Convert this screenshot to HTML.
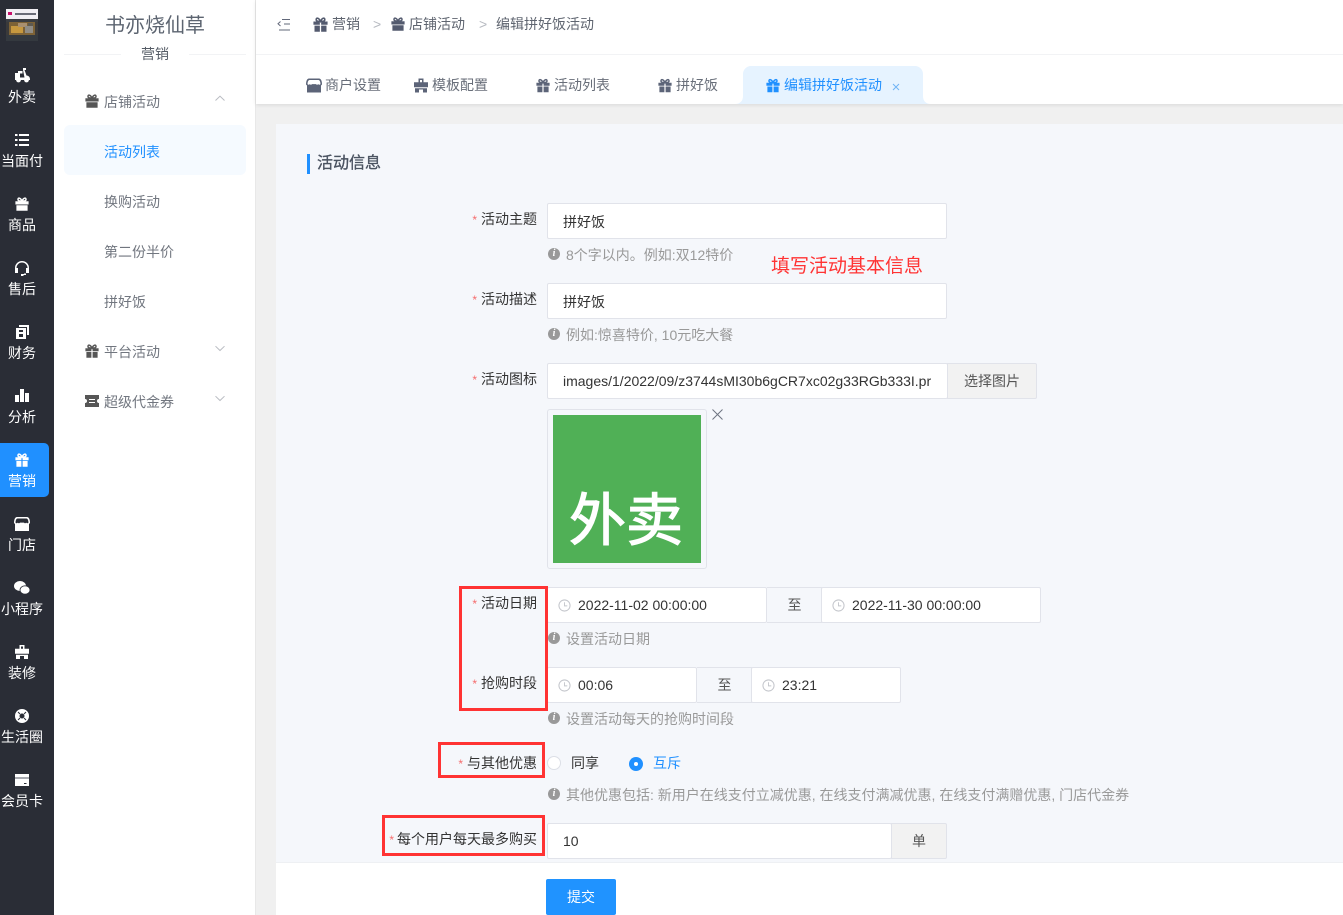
<!DOCTYPE html>
<html lang="zh"><head><meta charset="utf-8"><title>编辑拼好饭活动</title>
<style>
*{box-sizing:border-box}
html,body{margin:0;padding:0}
body{width:1343px;height:915px;overflow:hidden;position:relative;background:#f0f0f0;font-family:"Liberation Sans","Noto Sans CJK SC",sans-serif;font-size:14px;color:#333}
.a{position:absolute}
.t{position:absolute;white-space:nowrap;line-height:20px;height:20px}
svg.i{position:absolute;fill:currentColor}
.side{left:0;top:0;width:54px;height:915px;background:#2a2d36}
.sl{position:absolute;left:0;width:44px;text-align:center;color:#fff;line-height:20px;font-size:14px;white-space:nowrap;margin-top:1px}
.m{color:#71767f;margin-top:1px}
.inp{position:absolute;background:#fff;border:1px solid #e1e3ea;border-radius:2px;height:36px;line-height:34px;padding-left:15px;color:#333;white-space:nowrap;overflow:hidden;font-size:14px}
.add{position:absolute;background:#f2f2f2;border:1px solid #e1e3ea;height:36px;line-height:34px;text-align:center;color:#555;font-size:14px}
.add2{background:#f5f7fb}
.lab{position:absolute;right:806px;line-height:20px;white-space:nowrap;color:#333}
.lab b{color:#f56c6c;font-weight:normal;margin-right:4px;font-size:12px}
.hint{position:absolute;left:566px;line-height:20px;color:#999;white-space:nowrap;margin-top:1px}
.hi{position:absolute;left:548px;width:12px;height:12px;border-radius:50%;background:#999;color:#fff;font:italic bold 10px/12px "Liberation Serif",serif;text-align:center}
.rb{position:absolute;border:3px solid #f33}
.clk{position:absolute;width:13px;height:13px;color:#c4c6cc}
</style></head><body>
<svg width="0" height="0" style="position:absolute">
<symbol id="g" viewBox="0 0 14 14"><path d="M.4 4.200h6v3H.4zM7.600 4.200h6v3h-6zM1.400 8h5v5.800h-5zM7.600 8h5v5.800h-5z"/><path d="M7 4C5.400.6 3 .4 3 2.400S5.400 4 7 4c1.600 0 4 .4 4-1.600S8.600.6 7 4z" fill="none" stroke="currentColor" stroke-width="1.500"/></symbol>
<symbol id="g2" viewBox="0 0 14 14"><path d="M.4 4.200h13.200v3.300H.4zM1.400 8.300h11.200v5.500H1.400z"/><path d="M7 4C5.400.6 3 .4 3 2.400S5.400 4 7 4c1.600 0 4 .4 4-1.600S8.600.6 7 4z" fill="none" stroke="currentColor" stroke-width="1.500"/></symbol>
<symbol id="shop" viewBox="0 0 16 14"><path d="M3 0h10c2 0 3 2.500 3 6l-1 1v7H1V7L0 6c0-3.500 1-6 3-6zm.5 1.500C2.300 1.500 1.600 3.500 1.500 5.600c.8.800 1.500.8 2.300 0 .8.800 1.500.800 2.200 0h4c.700.800 1.400.800 2.200 0 .8.800 1.500.800 2.300 0-.1-2.100-.8-4.100-2-4.100z" fill-rule="evenodd"/></symbol>
<symbol id="tpl" viewBox="0 0 14 14"><path d="M4.500 0h5v3.800H14v5H0v-5h4.500zM6 1.500v2.300h2V1.500zM1 9.800h12V14H9v-3H5v3H1z" fill-rule="evenodd"/></symbol>
<symbol id="clock" viewBox="0 0 14 14"><circle cx="7" cy="7" r="6" fill="none" stroke="currentColor" stroke-width="1.100"/><path d="M7 3.500V7.400H10" fill="none" stroke="currentColor"/></symbol>
</svg>

<div class="a side"></div>
<svg class="a" style="left:6px;top:9px" width="32" height="32" viewBox="0 0 32 32"><rect width="32" height="32" fill="#3b3a3a"/><rect width="32" height="10" fill="#f1eff4"/><rect x="2" y="3" width="4" height="3" fill="#c8106b"/><rect x="9" y="4" width="21" height="2" fill="#6a6c78"/><rect y="10" width="32" height="3" fill="#3a3d42"/><rect x="3" y="13" width="26" height="13" fill="#7d6236"/><rect x="5" y="17" width="12" height="7" fill="#c6983f"/><rect x="12" y="14" width="9" height="4" fill="#a99070"/><rect x="19" y="17" width="8" height="7" fill="#8f8c86"/><rect x="22" y="14" width="5" height="3" fill="#5f5a50"/><rect y="26" width="32" height="6" fill="#34393f"/></svg>

<svg class="i" style="left:15px;top:68px;color:#fff" width="15" height="15" viewBox="0 0 15 15"><path d="M8 0h3v2H9.500l2 5.500A3.500 3.500 0 0 1 15 11v1h-1.100a2.400 2.400 0 0 1-4.800 0H5.900a2.400 2.400 0 0 1-4.800 0H0V5h3V3H7.500V5.500H5v4h4.500L8 2z"/></svg>
<div class="sl" style="top:86px">外卖</div>
<svg class="i" style="left:15px;top:134px;color:#fff" width="14" height="13" viewBox="0 0 14 13"><path d="M0 0h2.500v2H0zM4 0h10v2H4zM0 5h2.500v2H0zM4 5h10v2H4zM0 10h2.500v2H0zM4 10h10v2H4z"/></svg>
<div class="sl" style="top:150px">当面付</div>
<svg class="i" style="left:15px;top:197px;color:#fff" width="14" height="14"><use href="#g2"/></svg>
<div class="sl" style="top:214px">商品</div>
<svg class="i" style="left:15px;top:261px;color:#fff" width="14" height="15" viewBox="0 0 14 15"><path d="M7 0a7 7 0 0 1 7 7v5h-3V7h1.500a5.500 5.500 0 0 0-11 0H3v5H0V7a7 7 0 0 1 7-7zM9 12.500h2V14H8.500v1H6v-2h3z"/></svg>
<div class="sl" style="top:278px">售后</div>
<svg class="i" style="left:16px;top:325px;color:#fff" width="13" height="14" viewBox="0 0 13 14"><path d="M3 0h10v10h-2V2H3zM0 3h10v11H0zM3 5v2h4V5zM3 9v3h4V9z" fill-rule="evenodd"/></svg>
<div class="sl" style="top:342px">财务</div>
<svg class="i" style="left:15px;top:389px;color:#fff" width="14" height="13" viewBox="0 0 14 13"><path d="M0 6h4v7H0zM5 0h4v13H5zM10 4h4v9h-4z"/></svg>
<div class="sl" style="top:406px">分析</div>
<div class="a" style="left:0;top:443px;width:49px;height:54px;background:#2090ff;border-radius:0 5px 5px 0"></div>
<svg class="i" style="left:15px;top:453px;color:#fff" width="14" height="14"><use href="#g"/></svg>
<div class="sl" style="top:470px">营销</div>
<svg class="i" style="left:14px;top:517px;color:#fff" width="16" height="14"><use href="#shop"/></svg>
<div class="sl" style="top:534px">门店</div>
<svg class="i" style="left:14px;top:581px;color:#fff" width="16" height="14" viewBox="0 0 16 14"><ellipse cx="6" cy="5" rx="6" ry="5"/><ellipse cx="11" cy="9" rx="5" ry="4.200" stroke="#2a2d36" stroke-width=".8"/></svg>
<div class="sl" style="top:598px">小程序</div>
<svg class="i" style="left:15px;top:645px;color:#fff" width="14" height="14"><use href="#tpl"/></svg>
<div class="sl" style="top:662px">装修</div>
<svg class="i" style="left:15px;top:709px;color:#fff" width="14" height="14" viewBox="0 0 14 14"><path d="M7 0a7 7 0 1 1 0 14A7 7 0 0 1 7 0zm0 4.500a2.500 2.500 0 1 0 0 5 2.500 2.500 0 0 0 0-5z" fill-rule="evenodd"/><path d="M3 3l2 2M11 3 9 5M3 11l2-2M11 11 9 9" stroke="#2a2d36" stroke-width="1"/></svg>
<div class="sl" style="top:726px">生活圈</div>
<svg class="i" style="left:15px;top:774px" width="14" height="12" viewBox="0 0 14 12"><path fill="#fff" d="M0 0h14v12H0z"/><path fill="#a9abb1" d="M0 3h14v2H0z"/><path fill="#2a2d36" d="M9 9h2.500v1H9z"/></svg>
<div class="sl" style="top:790px">会员卡</div>

<div class="a" style="left:54px;top:0;width:202px;height:915px;background:#fff;border-right:1px solid #e8e8e8"></div>
<div class="t" style="left:105px;top:13px;font-size:20px;line-height:26px;height:26px;color:#5c6470">书亦烧仙草</div>
<div class="a" style="left:64px;top:54px;width:57px;height:1px;background:#f2f3f5"></div>
<div class="a" style="left:189px;top:54px;width:57px;height:1px;background:#f2f3f5"></div>
<div class="t" style="left:141px;top:44px;color:#555c66">营销</div>
<svg class="i" style="left:85px;top:94px;color:#565656" width="14" height="14"><use href="#g2"/></svg>
<div class="t m" style="left:104px;top:91px">店铺活动</div>
<svg class="a" style="left:215px;top:95px" width="10" height="7" viewBox="0 0 10 7"><path d="M.5 5.500 5 1.200 9.500 5.500" fill="none" stroke="#b9bcc2"/></svg>
<div class="a" style="left:64px;top:125px;width:182px;height:50px;background:#f5faff;border-radius:6px"></div>
<div class="t" style="left:104px;top:142px;color:#2090ff">活动列表</div>
<div class="t m" style="left:104px;top:191px">换购活动</div>
<div class="t m" style="left:104px;top:241px">第二份半价</div>
<div class="t m" style="left:104px;top:291px">拼好饭</div>
<svg class="i" style="left:85px;top:344px;color:#565656" width="14" height="14"><use href="#g"/></svg>
<div class="t m" style="left:104px;top:341px">平台活动</div>
<svg class="a" style="left:215px;top:345px" width="10" height="7" viewBox="0 0 10 7"><path d="M.5 1.200 5 5.500 9.500 1.200" fill="none" stroke="#b9bcc2"/></svg>
<svg class="i" style="left:85px;top:395px;color:#565656" width="14" height="12" viewBox="0 0 14 12"><path d="M0 0h14v4a2 2 0 0 0 0 4v4H0V8a2 2 0 0 0 0-4zM4 4v1h6V4zM4 7v1h6V7z" fill-rule="evenodd"/></svg>
<div class="t m" style="left:104px;top:391px">超级代金券</div>
<svg class="a" style="left:215px;top:395px" width="10" height="7" viewBox="0 0 10 7"><path d="M.5 1.200 5 5.500 9.500 1.200" fill="none" stroke="#b9bcc2"/></svg>

<div class="a" style="left:256px;top:0;width:1087px;height:104px;background:#fff;box-shadow:0 1px 4px rgba(0,0,0,.1)"></div>
<div class="a" style="left:256px;top:54px;width:1087px;height:1px;background:#f2f3f5"></div>
<svg class="a" style="left:277px;top:18px" width="14" height="13" viewBox="0 0 14 13"><path d="M5 1.500h8M7 6h6M2 12h11" stroke="#62687a" fill="none"/><path d="M3.500 3.500 1 5.800 3.500 8" stroke="#62687a" fill="none"/></svg>
<svg class="i" style="left:313px;top:17px;color:#535a6e" width="15" height="15"><use href="#g"/></svg>
<div class="t" style="left:332px;top:14px;color:#5f6570">营销</div>
<div class="t" style="left:373px;top:14px;color:#b6b9c0">&gt;</div>
<svg class="i" style="left:391px;top:17px;color:#535a6e" width="14" height="14"><use href="#g2"/></svg>
<div class="t" style="left:409px;top:14px;color:#5f6570">店铺活动</div>
<div class="t" style="left:479px;top:14px;color:#b6b9c0">&gt;</div>
<div class="t" style="left:496px;top:14px;color:#5f6570">编辑拼好饭活动</div>

<svg class="i" style="left:306px;top:78px;color:#5c6478" width="16" height="15"><use href="#shop"/></svg>
<div class="t" style="left:325px;top:75px;color:#686e79">商户设置</div>
<svg class="i" style="left:414px;top:78px;color:#5c6478" width="14" height="15"><use href="#tpl"/></svg>
<div class="t" style="left:432px;top:75px;color:#686e79">模板配置</div>
<svg class="i" style="left:536px;top:78px;color:#5c6478" width="14" height="15"><use href="#g"/></svg>
<div class="t" style="left:554px;top:75px;color:#686e79">活动列表</div>
<svg class="i" style="left:658px;top:78px;color:#5c6478" width="14" height="15"><use href="#g"/></svg>
<div class="t" style="left:676px;top:75px;color:#686e79">拼好饭</div>
<svg class="a" style="left:735px;top:66px" width="196" height="38" viewBox="0 0 196 38"><path d="M0 38c5 0 8-3 8-8V8a8 8 0 0 1 8-8h164a8 8 0 0 1 8 8v22c0 5 3 8 8 8z" fill="#e6f3ff"/></svg>
<svg class="i" style="left:766px;top:78px;color:#2090ff" width="14" height="15"><use href="#g"/></svg>
<div class="t" style="left:784px;top:75px;color:#2090ff">编辑拼好饭活动</div>
<svg class="a" style="left:892px;top:83px" width="8" height="8" viewBox="0 0 8 8"><path d="M1 1l6 6M7 1 1 7" stroke="#6fb4f5" fill="none"/></svg>

<div class="a" style="left:276px;top:124px;width:1067px;height:738px;background:#f5f7fb"></div>
<div class="a" style="left:276px;top:862px;width:1067px;height:53px;background:#fff;border-top:1px solid #eef0f3"></div>
<div class="a" style="left:307px;top:154px;width:3px;height:20px;background:#2090ff"></div>
<div class="t" style="left:317px;top:154px;font-size:16px;line-height:20px;height:20px;color:#4b5361;-webkit-text-stroke:.35px #4b5361">活动信息</div>

<div class="lab" style="top:209px"><b>*</b>活动主题</div>
<div class="inp" style="left:547px;top:203px;width:400px;line-height:36px">拼好饭</div>
<div class="hi" style="top:248px">i</div><div class="hint" style="top:244px">8个字以内。例如:双12特价</div>
<div class="t" style="left:771px;top:254px;font-size:19px;line-height:26px;height:26px;color:#f33">填写活动基本信息</div>

<div class="lab" style="top:289px"><b>*</b>活动描述</div>
<div class="inp" style="left:547px;top:283px;width:400px;line-height:36px">拼好饭</div>
<div class="hi" style="top:328px">i</div><div class="hint" style="top:324px">例如:惊喜特价, 10元吃大餐</div>

<div class="lab" style="top:369px"><b>*</b>活动图标</div>
<div class="inp" style="left:547px;top:363px;width:401px;padding-right:14px">images/1/2022/09/z3744sMI30b6gCR7xc02g33RGb333I.pr</div>
<div class="add" style="left:947px;top:363px;width:90px;border-radius:0 2px 2px 0">选择图片</div>
<div class="a" style="left:547px;top:409px;width:160px;height:160px;border:1px solid #e1e3ea;border-radius:3px;background:#f5f7fb"></div>
<div class="a" style="left:553px;top:415px;width:148px;height:148px;background:#50b056;overflow:hidden"><div style="position:absolute;left:16px;top:58px;width:120px;font-size:57px;line-height:86px;color:#fff;white-space:nowrap;font-family:'Noto Sans CJK SC',sans-serif;-webkit-text-stroke:1.2px #fff">外卖</div></div>
<svg class="a" style="left:712px;top:409px" width="11" height="11" viewBox="0 0 11 11"><path d="M.5.500l10 10M10.500.500l-10 10" stroke="#6d7480" fill="none"/></svg>

<div class="lab" style="top:593px"><b>*</b>活动日期</div>
<div class="inp" style="left:547px;top:587px;width:220px;padding-left:30px">2022-11-02 00:00:00</div>
<div class="add add2" style="left:767px;top:587px;width:55px;border-left:0;border-right:0">至</div>
<div class="inp" style="left:821px;top:587px;width:220px;padding-left:30px">2022-11-30 00:00:00</div>
<svg class="clk" style="left:558px;top:599px"><use href="#clock"/></svg>
<svg class="clk" style="left:832px;top:599px"><use href="#clock"/></svg>
<div class="hi" style="top:632px">i</div><div class="hint" style="top:628px">设置活动日期</div>

<div class="lab" style="top:673px"><b>*</b>抢购时段</div>
<div class="inp" style="left:547px;top:667px;width:150px;padding-left:30px">00:06</div>
<div class="add add2" style="left:697px;top:667px;width:55px;border-left:0;border-right:0">至</div>
<div class="inp" style="left:751px;top:667px;width:150px;padding-left:30px">23:21</div>
<svg class="clk" style="left:558px;top:679px"><use href="#clock"/></svg>
<svg class="clk" style="left:762px;top:679px"><use href="#clock"/></svg>
<div class="hi" style="top:712px">i</div><div class="hint" style="top:708px">设置活动每天的抢购时间段</div>

<div class="lab" style="top:753px"><b>*</b>与其他优惠</div>
<div class="a" style="left:547px;top:756px;width:14px;height:14px;border-radius:50%;border:1px solid #dcdfe6;background:#fff"></div>
<div class="t" style="left:571px;top:753px">同享</div>
<div class="a" style="left:629px;top:757px;width:14px;height:14px;border-radius:50%;background:#2090ff"></div>
<div class="a" style="left:634px;top:762px;width:4px;height:4px;border-radius:50%;background:#fff"></div>
<div class="t" style="left:653px;top:753px;color:#2090ff">互斥</div>
<div class="hi" style="top:788px">i</div><div class="hint" style="top:784px">其他优惠包括: 新用户在线支付立减优惠, 在线支付满减优惠, 在线支付满赠优惠, 门店代金券</div>

<div class="lab" style="top:829px"><b style="margin-right:3px">*</b>每个用户每天最多购买</div>
<div class="inp" style="left:547px;top:823px;width:345px">10</div>
<div class="add" style="left:891px;top:823px;width:56px;border-radius:0 2px 2px 0">单</div>

<div class="a" style="left:546px;top:879px;width:70px;height:36px;background:#2093ff;border-radius:2px;color:#fff;text-align:center;line-height:36px">提交</div>

<div class="rb" style="left:459px;top:586px;width:89px;height:125px"></div>
<div class="rb" style="left:438px;top:742px;width:107px;height:36px"></div>
<div class="rb" style="left:382px;top:815px;width:163px;height:41px"></div>
</body></html>
